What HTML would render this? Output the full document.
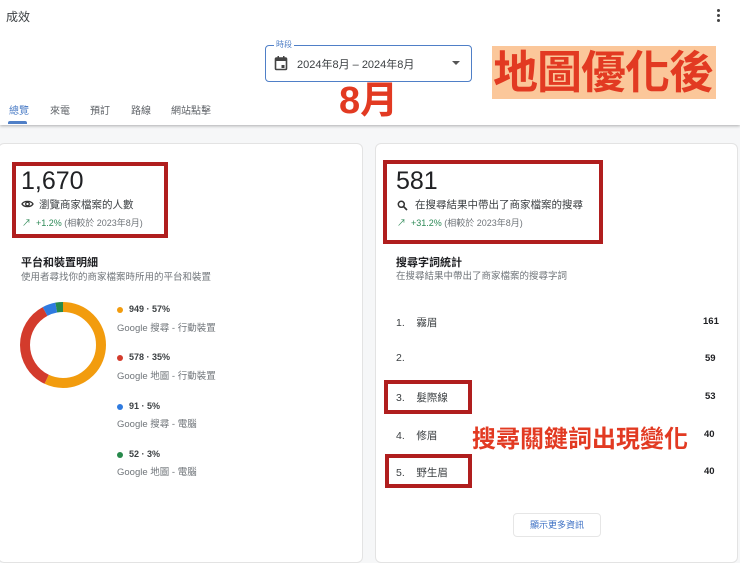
<!DOCTYPE html>
<html><head><meta charset="utf-8"><style>
*{margin:0;padding:0;box-sizing:border-box}
body{width:740px;height:555px;overflow:hidden;background:#f6f7f8;font-family:"Liberation Sans","Noto Sans CJK TC",sans-serif;color:#202124;position:relative}
.abs{position:absolute}
.hdr{left:0;top:0;width:740px;height:125px;background:#fff;box-shadow:0 1px 3px rgba(0,0,0,.3)}
.card{background:#fff;border:1px solid #e3e3e3;border-radius:6px;top:143px;height:420px}
.red{border:4px solid #b01e1e}
.g{color:#70757a}
.big{font-size:25px;color:#202124}
.dot{display:inline-block;width:6px;height:6px;border-radius:50%;margin-right:6px;vertical-align:middle}
</style></head><body>
<div class="abs hdr">
 <div class="abs" style="left:6px;top:8px;font-size:12px;color:#3c4043">成效</div>
 <div class="abs" style="left:717px;top:9px;width:3px">
  <div style="width:3px;height:3px;background:#444;border-radius:50%;margin-bottom:2px"></div>
  <div style="width:3px;height:3px;background:#444;border-radius:50%;margin-bottom:2px"></div>
  <div style="width:3px;height:3px;background:#444;border-radius:50%"></div></div>
 <div class="abs" style="left:265px;top:45px;width:207px;height:37px;border:1.5px solid #4f7fc7;border-radius:4px"></div>
 <div class="abs" style="left:274px;top:39px;font-size:8px;color:#4f7fc7;background:#fff;padding:0 2px">時段</div>
 <svg class="abs" style="left:274px;top:55px" width="14" height="16" viewBox="0 0 14 16"><rect x="1.5" y="3" width="11" height="11.5" rx="1" fill="none" stroke="#444" stroke-width="1.6"/><rect x="1.5" y="3" width="11" height="3" fill="#444"/><rect x="3.5" y="1" width="1.5" height="3" fill="#444"/><rect x="9" y="1" width="1.5" height="3" fill="#444"/><rect x="7.5" y="10" width="3" height="3" fill="#444"/></svg>
 <div class="abs" style="left:297px;top:56px;font-size:11px;color:#3c4043">2024年8月 – 2024年8月</div>
 <div class="abs" style="left:452px;top:61px;width:0;height:0;border-left:4px solid transparent;border-right:4px solid transparent;border-top:4px solid #555"></div>
 <div class="abs" style="left:492px;top:46px;width:224px;height:53px;background:#fbc79a"></div>
 <div class="abs" style="left:493px;top:45px;font-size:45px;font-weight:bold;color:#e23a22;letter-spacing:-1px;line-height:56px;white-space:nowrap">地圖優化後</div>
 <div class="abs" style="left:339px;top:80px;font-size:38px;font-weight:bold;color:#e23a22;line-height:42px">8月</div>
 <div class="abs" style="left:9px;top:102px;font-size:10px;color:#4f7fc7">總覽</div>
 <div class="abs" style="left:8px;top:121px;width:19px;height:3px;background:#4f7fc7;border-radius:2px 2px 0 0"></div>
 <div class="abs" style="left:50px;top:102px;font-size:10px;color:#5f6368">來電</div>
 <div class="abs" style="left:90px;top:102px;font-size:10px;color:#5f6368">預訂</div>
 <div class="abs" style="left:131px;top:102px;font-size:10px;color:#5f6368">路線</div>
 <div class="abs" style="left:171px;top:102px;font-size:10px;color:#5f6368">網站點擊</div>
</div>
<div class="abs card" style="left:-2px;width:365px"></div>
<div class="abs card" style="left:375px;width:363px"></div>

<div class="abs red" style="left:12px;top:162px;width:156px;height:76px"></div>
<div class="abs big" style="left:21px;top:167px">1,670</div>
<svg class="abs" style="left:21px;top:199px" width="13" height="10" viewBox="0 0 13 10"><path d="M1 5C3 1.5 10 1.5 12 5C10 8.5 3 8.5 1 5Z" fill="none" stroke="#333" stroke-width="1.3"/><circle cx="6.5" cy="5" r="1.8" fill="none" stroke="#333" stroke-width="1.3"/></svg>
<div class="abs" style="left:39px;top:197px;font-size:10.5px;color:#3c4043">瀏覽商家檔案的人數</div>
<div class="abs" style="left:22px;top:216px;font-size:9px;color:#2e8a57">↗&nbsp; +1.2% <span class="g">(相較於 2023年8月)</span></div>
<div class="abs" style="left:21px;top:254px;font-size:11px;font-weight:bold">平台和裝置明細</div>
<div class="abs g" style="left:21px;top:269px;font-size:9.5px">使用者尋找你的商家檔案時所用的平台和裝置</div>
<svg class="abs" style="left:19px;top:301px" width="88" height="88" viewBox="0 0 88 88"><g transform="rotate(-90 44 44)" fill="none" stroke-width="10">
<circle cx="44" cy="44" r="38" stroke="#f29c0e" stroke-dasharray="136.1 238.8"/>
<circle cx="44" cy="44" r="38" stroke="#d33b2c" stroke-dasharray="0 136.1 83.6 238.8"/>
<circle cx="44" cy="44" r="38" stroke="#2f7be0" stroke-dasharray="0 219.7 11.9 238.8"/>
<circle cx="44" cy="44" r="38" stroke="#27894b" stroke-dasharray="0 231.6 7.2 238.8"/></g></svg>
<div class="abs" style="left:117px;top:304px;font-size:9px;font-weight:bold;color:#3c4043"><span class="dot" style="background:#f29c0e"></span>949 · 57%</div>
<div class="abs g" style="left:117px;top:320px;font-size:9.5px">Google 搜尋 - 行動裝置</div>
<div class="abs" style="left:117px;top:352px;font-size:9px;font-weight:bold;color:#3c4043"><span class="dot" style="background:#d33b2c"></span>578 · 35%</div>
<div class="abs g" style="left:117px;top:368px;font-size:9.5px">Google 地圖 - 行動裝置</div>
<div class="abs" style="left:117px;top:401px;font-size:9px;font-weight:bold;color:#3c4043"><span class="dot" style="background:#2f7be0"></span>91 · 5%</div>
<div class="abs g" style="left:117px;top:416px;font-size:9.5px">Google 搜尋 - 電腦</div>
<div class="abs" style="left:117px;top:449px;font-size:9px;font-weight:bold;color:#3c4043"><span class="dot" style="background:#27894b"></span>52 · 3%</div>
<div class="abs g" style="left:117px;top:464px;font-size:9.5px">Google 地圖 - 電腦</div>

<div class="abs red" style="left:383px;top:160px;width:220px;height:84px"></div>
<div class="abs big" style="left:396px;top:167px">581</div>
<svg class="abs" style="left:397px;top:200px" width="11" height="11" viewBox="0 0 11 11"><circle cx="4.3" cy="4.3" r="3" fill="none" stroke="#333" stroke-width="1.5"/><path d="M6.5 6.5L10 10" stroke="#333" stroke-width="1.6"/></svg>
<div class="abs" style="left:415px;top:197px;font-size:10.5px;color:#3c4043">在搜尋結果中帶出了商家檔案的搜尋</div>
<div class="abs" style="left:397px;top:216px;font-size:9px;color:#2e8a57">↗&nbsp; +31.2% <span class="g">(相較於 2023年8月)</span></div>
<div class="abs" style="left:396px;top:254px;font-size:11px;font-weight:bold">搜尋字詞統計</div>
<div class="abs g" style="left:396px;top:268px;font-size:9.5px">在搜尋結果中帶出了商家檔案的搜尋字詞</div>
<div class="abs" style="left:396px;top:315px;font-size:10.5px;color:#3c4043">1.&nbsp;&nbsp;&nbsp; 霧眉</div><div class="abs" style="left:703px;top:316px;font-size:9.5px;font-weight:bold">161</div>
<div class="abs" style="left:396px;top:352px;font-size:10.5px;color:#3c4043">2.</div><div class="abs" style="left:705px;top:353px;font-size:9.5px;font-weight:bold">59</div>
<div class="abs" style="left:396px;top:390px;font-size:10.5px;color:#3c4043">3.&nbsp;&nbsp;&nbsp; 髮際線</div><div class="abs" style="left:705px;top:391px;font-size:9.5px;font-weight:bold">53</div>
<div class="abs" style="left:396px;top:428px;font-size:10.5px;color:#3c4043">4.&nbsp;&nbsp;&nbsp; 修眉</div><div class="abs" style="left:704px;top:429px;font-size:9.5px;font-weight:bold">40</div>
<div class="abs" style="left:396px;top:465px;font-size:10.5px;color:#3c4043">5.&nbsp;&nbsp;&nbsp; 野生眉</div><div class="abs" style="left:704px;top:466px;font-size:9.5px;font-weight:bold">40</div>
<div class="abs red" style="left:384px;top:380px;width:88px;height:34px"></div>
<div class="abs red" style="left:385px;top:454px;width:87px;height:34px"></div>
<div class="abs" style="left:472px;top:419px;font-size:24px;font-weight:bold;color:#e23a22;letter-spacing:0;white-space:nowrap">搜尋關鍵詞出現變化</div>
<div class="abs" style="left:513px;top:513px;width:88px;height:24px;border:1px solid #e6e6e6;border-radius:4px;font-size:9px;color:#3b6fc4;text-align:center;line-height:22px">顯示更多資訊</div>
</body></html>
